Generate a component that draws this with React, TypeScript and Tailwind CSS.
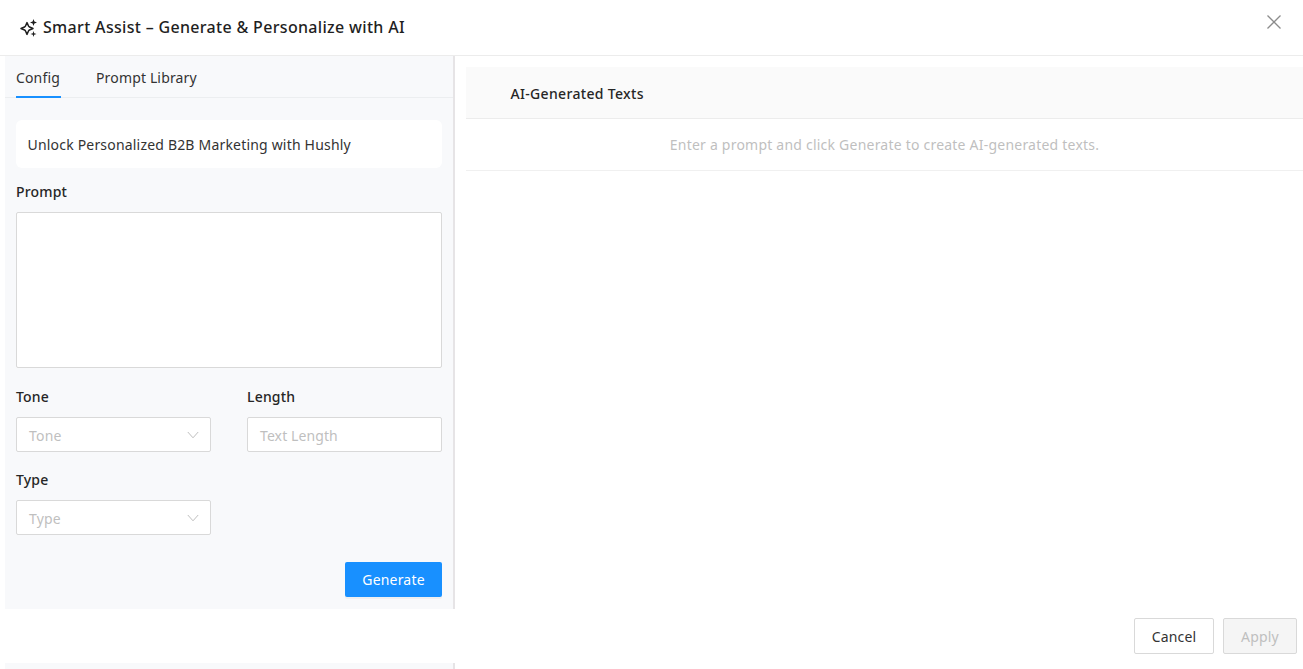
function Sparkle() {
  return (
    <svg width="19" height="19" viewBox="0 0 19 19" fill="none" className="mr-[5px] shrink-0">
      <path d="M8 4.6 L9.5 8 Q9.8 8.7 10.5 9 L14 10.5 L10.5 12 Q9.8 12.3 9.5 13 L8 16.4 L6.5 13 Q6.2 12.3 5.5 12 L2 10.5 L5.5 9 Q6.2 8.7 6.5 8 Z" stroke="#1f1f1f" strokeWidth="1.5" strokeLinejoin="round" />
      <path d="M14.5 1 L15.4 3.6 L18 4.5 L15.4 5.4 L14.5 8 L13.6 5.4 L11 4.5 L13.6 3.6 Z" fill="#1f1f1f" />
      <path d="M14.5 13 L15.2 15.3 L17.5 16 L15.2 16.7 L14.5 19 L13.8 16.7 L11.5 16 L13.8 15.3 Z" fill="#1f1f1f" />
    </svg>
  )
}

function Chevron() {
  return (
    <svg width="12" height="8" viewBox="0 0 12 8" fill="none">
      <path d="M0.8 1 L6 6.8 L11.2 1" stroke="#bfbfbf" strokeWidth="1" />
    </svg>
  )
}

function CloseIcon() {
  return (
    <svg width="16" height="16" viewBox="0 0 16 16" fill="none" className="mb-[12px]">
      <path d="M1.5 1.5 L14.5 14.5 M14.5 1.5 L1.5 14.5" stroke="#8c8c8c" strokeWidth="1.3" />
    </svg>
  )
}

function SelectBox({ placeholder }: { placeholder: string }) {
  return (
    <div className="flex h-[35px] w-[195px] items-center justify-between rounded-[2px] border border-[#d9d9d9] bg-white pr-[11px] pl-3 text-[14px] text-[#bfbfbf]">
      <span className="pt-px">{placeholder}</span>
      <Chevron />
    </div>
  )
}

function FieldLabel({ children }: { children: string }) {
  return <div className="h-[21px] text-[14px] leading-[21px] font-medium text-[#262626]">{children}</div>
}

export default function App() {
  return (
    <div className="flex h-[669px] flex-col overflow-hidden bg-white font-['Noto_Sans','Open_Sans',sans-serif] tracking-[0.19px]">
      {/* header */}
      <div className="flex h-[56px] shrink-0 items-center justify-between border-b border-[#ececec] pr-[21px] pl-[19px]">
        <div className="flex items-center text-[16px] font-medium tracking-[0.32px] text-[#1f1f1f]">
          <Sparkle />
          <span className="pb-[2px]">Smart Assist – Generate &amp; Personalize with AI</span>
        </div>
        <CloseIcon />
      </div>

      <div className="flex h-[553px] shrink-0 pl-[5px]">
        {/* left panel */}
        <div className="flex w-[450px] shrink-0 flex-col border-r-2 border-[#e6e4e6] bg-[#f8f9fb]">
          <div className="flex h-[42px] shrink-0 gap-[35px] border-b border-[#eceef0] pl-[11px] text-[14px] tracking-[0.15px] text-[#333333]">
            <div className="flex h-[42px] w-[45px] items-center border-b-2 border-[#1890ff] pt-[3px]">Config</div>
            <div className="flex h-[42px] items-center">Prompt Library</div>
          </div>
          <div className="flex flex-col pt-[22px] pr-[11px] pl-[11px]">
            <div className="flex h-[48px] items-center rounded-[6px] bg-white pl-[11.5px] text-[14px] text-[#333333]">
              Unlock Personalized B2B Marketing with Hushly
            </div>
            <div className="mt-[13px] mb-[10px]">
              <FieldLabel>Prompt</FieldLabel>
            </div>
            <div className="h-[156px] rounded-[2px] border border-[#d9d9d9] bg-white" />
            <div className="mt-[18px] grid grid-cols-[195px_195px] gap-x-[36px]">
              <div className="flex flex-col gap-[10px]">
                <FieldLabel>Tone</FieldLabel>
                <SelectBox placeholder="Tone" />
              </div>
              <div className="flex flex-col gap-[10px]">
                <FieldLabel>Length</FieldLabel>
                <div className="flex h-[35px] items-center rounded-[2px] border border-[#d9d9d9] bg-white pt-px pl-3 text-[14px] tracking-[0.1px] text-[#bfbfbf]">
                  Text Length
                </div>
              </div>
            </div>
            <div className="mt-[17px] flex flex-col gap-[10px]">
              <FieldLabel>Type</FieldLabel>
              <SelectBox placeholder="Type" />
            </div>
            <div className="mt-[27px] flex justify-end">
              <button className="h-[35px] w-[97px] rounded-[2px] bg-[#1890ff] text-[14px] text-white shadow-[0_2px_0_rgba(0,0,0,0.04)]">
                Generate
              </button>
            </div>
          </div>
        </div>

        {/* right panel */}
        <div className="min-w-0 flex-1 pt-[11px] pl-[11px]">
          <div className="flex h-[52px] items-center border-b border-[#ececec] bg-[#fafafa] pt-px pl-[44.5px] text-[14px] font-medium tracking-[0.33px] text-[#262626]">
            AI-Generated Texts
          </div>
          <div className="flex h-[52px] items-center justify-center border-b border-[#f0f0f0] text-[14px] tracking-[0.22px] text-[#bfbfbf]">
            Enter a prompt and click Generate to create AI-generated texts.
          </div>
        </div>
      </div>

      {/* footer */}
      <div className="flex h-[54px] shrink-0 items-start justify-end gap-[9px] pt-[9px] pr-[6px]">
        <button className="h-[36px] w-[80px] rounded-[2px] border border-[#d9d9d9] bg-white text-[14px] text-[#333333]">
          Cancel
        </button>
        <button className="h-[36px] w-[74px] rounded-[2px] border border-[#d9d9d9] bg-[#f5f5f5] text-[14px] text-[#bfbfbf]">
          Apply
        </button>
      </div>

      {/* next section peeking in below */}
      <div className="flex-1 pl-[5px]">
        <div className="h-full w-[450px] border-r-2 border-[#e6e4e6] bg-[#f8f9fb]" />
      </div>
    </div>
  )
}
